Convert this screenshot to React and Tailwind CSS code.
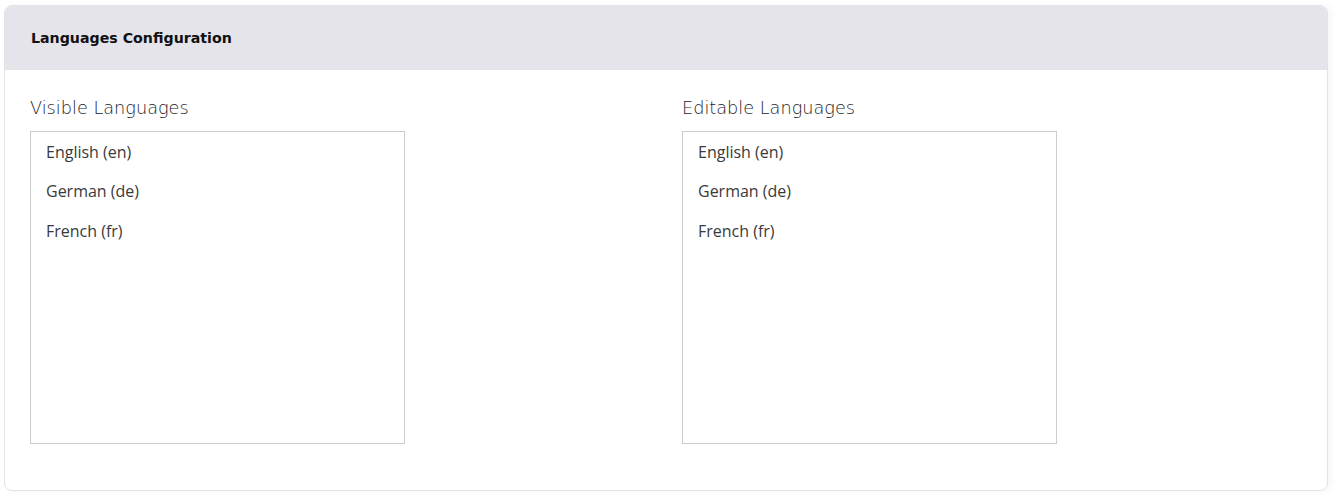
import React from "react";

const languages = ["English (en)", "German (de)", "French (fr)"];

function LanguageList({ label }) {
  return (
    <div className="flex flex-col">
      <label className="text-[17.7px] leading-[24px] text-[#22222a] font-['DejaVu_Sans',sans-serif] font-light pt-[26px] pb-[11px]">
        {label}
      </label>
      <div className="w-[375px] h-[313px] border border-[#cccccc] bg-white">
        {languages.map((lang) => (
          <div
            key={lang}
            className="h-[39.5px] flex items-center pl-[15px] text-[16px] text-[#3a3a3a] font-['Open_Sans',sans-serif]"
          >
            {lang}
          </div>
        ))}
      </div>
    </div>
  );
}

export default function App() {
  return (
    <div className="w-[1336px] h-[499px] bg-white pl-[4px] pr-[8px] pt-[5px] overflow-hidden">
      <div className="w-[1324px] h-[486px] rounded-[8px] border border-[#e2e2e8] bg-white overflow-hidden shadow-[3px_0_6px_rgba(0,0,0,0.04)]">
        <div className="h-[64px] bg-[#e4e4ea] flex items-center pl-[26px] pt-[2px]">
          <h2 className="text-[14.2px] font-bold text-[#111111] font-['DejaVu_Sans',sans-serif]">
            Languages Configuration
          </h2>
        </div>
        <div className="grid grid-cols-2 gap-8 px-[25px]">
          <LanguageList label="Visible Languages" />
          <LanguageList label="Editable Languages" />
        </div>
      </div>
    </div>
  );
}
